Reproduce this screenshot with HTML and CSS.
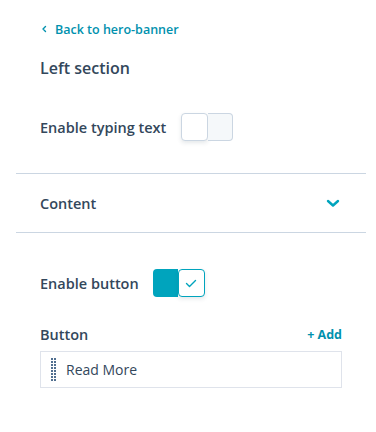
FILE: index.html
```html
<!DOCTYPE html>
<html lang="en">
<head>
    <meta charset="UTF-8">
    <meta name="viewport" content="width=device-width, initial-scale=1.0">
    <title>Left section</title>
    <link rel="stylesheet" href="styles.css">
</head>
<body>
    <div class="panel">
        <div class="section">
            <a href="#" class="back">
                <svg width="8" height="8" viewBox="0 0 8 8"><path d="M5.5 1.5 L3 4 L5.5 6.5" fill="none" stroke="#0091ae" stroke-width="1.4" stroke-linecap="round" stroke-linejoin="round"/></svg>
                Back to hero-banner
            </a>
            <h2 class="title">Left section</h2>

            <div class="field-row">
                <span class="label">Enable typing text</span>
                <span class="toggle">
                    <span class="knob"></span>
                    <span class="track"></span>
                </span>
            </div>
        </div>

        <!-- Accordion -->
        <div class="accordion">
            <span class="label">Content</span>
            <svg width="14" height="9" viewBox="0 0 14 9"><path d="M2 2 L7 6.5 L12 2" fill="none" stroke="#00a4bd" stroke-width="2.4" stroke-linecap="round" stroke-linejoin="round"/></svg>
        </div>

        <div class="section">
            <div class="field-row on-row">
                <span class="label">Enable button</span>
                <span class="toggle on">
                    <span class="track"></span>
                    <span class="knob">
                        <svg width="12" height="9" viewBox="0 0 12 9"><path d="M1.5 4.5 L4.5 7.5 L10.5 1.5" fill="none" stroke="#00a4bd" stroke-width="1.4" stroke-linecap="round" stroke-linejoin="round"/></svg>
                    </span>
                </span>
            </div>

            <div class="list-head">
                <span class="label">Button</span>
                <a href="#" class="add">+ Add</a>
            </div>
            <div class="list-item">
                <svg class="handle" width="5" height="23" viewBox="0 0 5 23">
                    <defs>
                        <pattern id="dots" width="3" height="3" patternUnits="userSpaceOnUse">
                            <rect width="2" height="2" fill="#516f90"/>
                        </pattern>
                    </defs>
                    <rect width="5" height="23" fill="url(#dots)"/>
                </svg>
                <span class="item-text">Read More</span>
            </div>
        </div>
    </div>
</body>
</html>
```

FILE: styles.css
```css
body {
    margin: 0;
    background-color: #fff;
    font-family: "Open Sans", Lato, sans-serif;
    color: #33475b;
}

.panel {
    margin: 0 10px 0 16px;
}

.section {
    padding: 0 24px;
}

/* Back link */
.back {
    display: flex;
    align-items: center;
    gap: 7px;
    padding-top: 20px;
    height: 18px;
    color: #0091ae;
    font-size: 12.5px;
    font-weight: 600;
    text-decoration: none;
}

.title {
    margin: 20px 0 0;
    font-size: 16px;
    font-weight: 600;
    line-height: 20px;
}

.label {
    font-size: 14.5px;
    font-weight: 600;
}

.field-row {
    display: flex;
    align-items: center;
    gap: 15px;
    margin-top: 35px;
    padding-bottom: 32px;
}

/* Toggle switch */
.toggle {
    display: flex;
    width: 52px;
    height: 28px;
}

.toggle .knob {
    box-sizing: border-box;
    width: 27px;
    height: 28px;
    background-color: #fff;
    border: 1px solid #cbd6e2;
    border-radius: 4px;
    box-shadow: 0 2px 4px rgba(45, 62, 80, 0.12);
    display: flex;
    align-items: center;
    justify-content: center;
}

.toggle .track {
    box-sizing: border-box;
    flex: 1;
    background-color: #f5f8fa;
    border: 1px solid #cbd6e2;
    border-left: none;
    border-radius: 0 4px 4px 0;
}

.toggle.on .track {
    background-color: #00a4bd;
    border: none;
    border-radius: 4px 0 0 4px;
}

.toggle.on .knob {
    border-color: #00a4bd;
}

/* Accordion */
.accordion {
    display: flex;
    align-items: center;
    justify-content: space-between;
    height: 58px;
    padding: 0 26px 0 24px;
    border-top: 1px solid #cbd6e2;
    border-bottom: 1px solid #cbd6e2;
}

.on-row {
    gap: 14px;
    margin-top: 36px;
    padding-bottom: 28px;
}

/* Repeater list */
.list-head {
    display: flex;
    justify-content: space-between;
    align-items: center;
}

.add {
    color: #0091ae;
    font-size: 12.5px;
    font-weight: 700;
    text-decoration: none;
}

.list-item {
    display: flex;
    align-items: center;
    height: 35px;
    margin-top: 7px;
    border: 1px solid #dfe3eb;
    width: 300px;
}

.handle {
    margin: 0 10px 0 10px;
}

.item-text {
    font-size: 14px;
    color: #33475b;
}
```
